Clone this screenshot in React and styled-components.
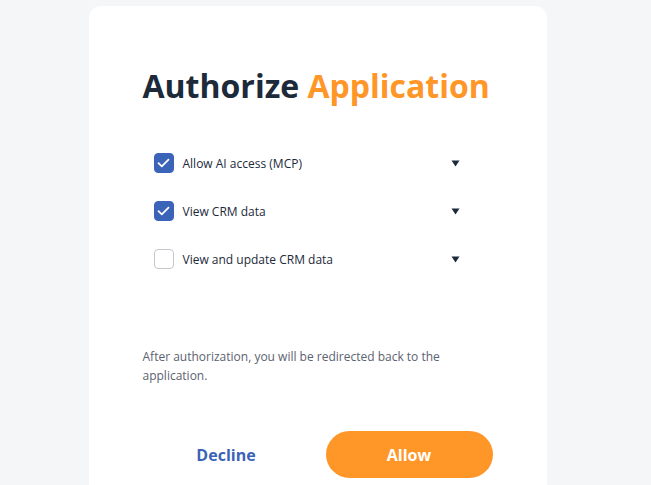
import React, { useState } from 'react';
import styled, { createGlobalStyle } from 'styled-components';

const GlobalStyle = createGlobalStyle`
	* {
		box-sizing: border-box;
	}
	body {
		margin: 0;
		background: #f5f6f8;
		font-family: 'Open Sans', 'Noto Sans', sans-serif;
	}
`;

const Page = styled.div`
	display: flex;
	align-items: flex-start;
	justify-content: center;
	padding: 6px 16px 0 0;
	height: 485px;
	overflow: hidden;
`;

const Card = styled.div`
	flex-shrink: 0;
	width: 458px;
	background: #fff;
	border-radius: 12px;
	padding: 58px 54px 80px;
`;

const Title = styled.h1`
	margin: 0;
	font-size: 32px;
	font-weight: 700;
	color: #1c2a3a;
	letter-spacing: 0;
	line-height: 44px;

	span {
		color: #ff9628;
	}
`;

const Scopes = styled.ul`
	list-style: none;
	margin: 45px 0 0;
	padding: 0 0 0 11px;
	display: flex;
	flex-direction: column;
	gap: 28px;
`;

const Scope = styled.li`
	display: flex;
	align-items: center;
	height: 20px;
	padding-right: 33px;
`;

const Box = styled.span`
	width: 20px;
	height: 20px;
	border-radius: 4px;
	flex-shrink: 0;
	display: flex;
	align-items: center;
	justify-content: center;
	cursor: pointer;
	background: ${(p) => (p.checked ? '#3b63b8' : '#fff')};
	border: 1px solid ${(p) => (p.checked ? '#3b63b8' : '#c4c7cc')};
`;

const Label = styled.span`
	flex: 1;
	margin-left: 9px;
	font-size: 12px;
	color: #1c2a3a;
`;

const Caret = styled.svg`
	width: 9px;
	height: 7px;
	flex-shrink: 0;
`;

const Note = styled.p`
	margin: 78px 0 0;
	font-size: 12px;
	line-height: 19px;
	color: #5b6270;
`;

const Actions = styled.div`
	display: flex;
	align-items: center;
	margin-top: 46px;
`;

const Button = styled.button`
	flex: 1;
	height: 47px;
	border: none;
	border-radius: 24px;
	font-family: inherit;
	font-size: 16px;
	font-weight: 700;
	cursor: pointer;
	background: ${(p) => (p.primary ? '#ff9628' : 'transparent')};
	color: ${(p) => (p.primary ? '#fff' : '#3b63b8')};
	margin-left: ${(p) => (p.primary ? '16px' : '0')};
`;

const scopes = [
	{ id: 'mcp', label: 'Allow AI access (MCP)', checked: true },
	{ id: 'crm-read', label: 'View CRM data', checked: true },
	{ id: 'crm-write', label: 'View and update CRM data', checked: false },
];

const App = () => {
	const [items, setItems] = useState(scopes);

	const toggle = (id) =>
		setItems(items.map((s) => (s.id === id ? { ...s, checked: !s.checked } : s)));

	return (
		<>
			<GlobalStyle />
			<Page>
				<Card>
					<Title>
						Authorize <span>Application</span>
					</Title>
					<Scopes>
						{items.map((s) => (
							<Scope key={s.id}>
								<Box checked={s.checked} onClick={() => toggle(s.id)}>
									{s.checked && (
										<svg width='13' height='10' viewBox='0 0 13 10'>
											<path
												d='M1.5 5.2 L4.8 8.3 L11.5 1.7'
												fill='none'
												stroke='#fff'
												strokeWidth='1.8'
												strokeLinecap='round'
												strokeLinejoin='round'
											/>
										</svg>
									)}
								</Box>
								<Label>{s.label}</Label>
								<Caret viewBox='0 0 9 7'>
									<path d='M0.5 0.5 H8.5 L4.5 6.5 Z' fill='#1c2a3a' />
								</Caret>
							</Scope>
						))}
					</Scopes>
					<Note>
						After authorization, you will be redirected back to the application.
					</Note>
					<Actions>
						<Button>Decline</Button>
						<Button primary>Allow</Button>
					</Actions>
				</Card>
			</Page>
		</>
	);
};

export default App;
